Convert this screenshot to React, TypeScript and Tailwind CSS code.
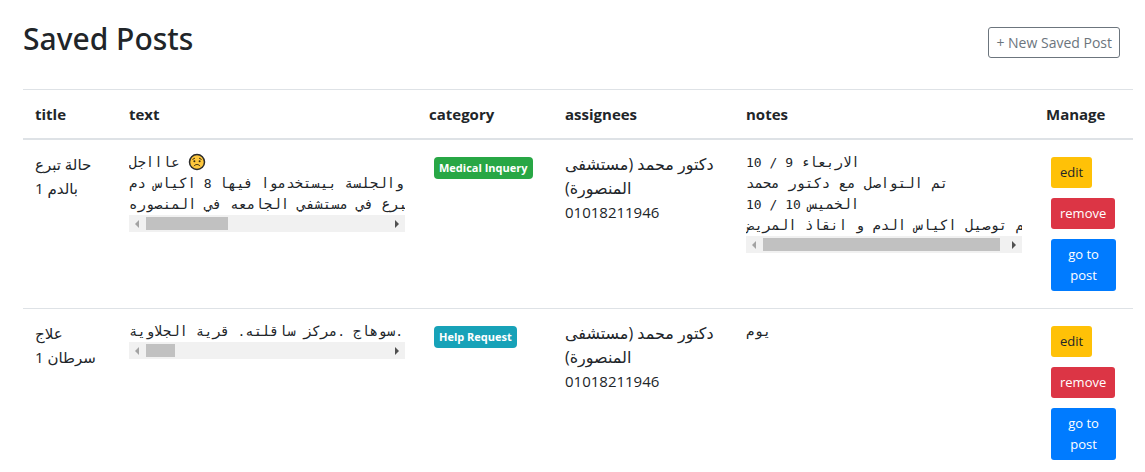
import type { ReactNode } from "react";

type Post = {
  title: string[];
  text: ReactNode[];
  textThumb: string;
  category: string;
  categoryColor: string;
  assignee: string[];
  phone: string;
  notes: ReactNode[];
  notesThumb?: string;
};

function WorriedFace() {
  return (
    <svg viewBox="0 0 18 18" className="inline-block size-[18px] align-[-4px]" role="img" aria-label="worried face">
      <circle cx="9" cy="9" r="7.5" fill="#ffc83d" stroke="#2b2b2b" strokeWidth="1.5" />
      <circle cx="6.4" cy="8.300" r="1" fill="#35290f" />
      <circle cx="11.6" cy="8.300" r="1" fill="#35290f" />
      <path d="M4.800 6.300 6.600 5.300M13.200 6.300 11.400 5.300M6.200 12.800c1.100-1.800 4.500-1.800 5.600 0" fill="none" stroke="#35290f" strokeWidth="1" strokeLinecap="round" />
    </svg>
  );
}

/* Digits, spaces and punctuation are set slightly smaller than the Arabic letters. */
function Mixed({ children }: { children: string }) {
  return (
    <span dir="rtl">
      {children.split(/([^\u0600-\u06FF]+)/).map((part, i) =>
        i % 2 ? <span key={i} className="text-[13px]">{part}</span> : part,
      )}
    </span>
  );
}

const assignee = ["دكتور محمد (مستشفى", "المنصورة)"];

const posts: Post[] = [
  {
    title: ["حالة تبرع", "بالدم 1"],
    text: [
      <>عاااجل <WorriedFace /></>,
      <Mixed>والجلسة بيستخدموا فيها 8 اكياس دم</Mixed>,
      <span dir="rtl">للتبرع في مستشفي الجامعه في المنصوره</span>,
    ],
    textThumb: "w-[34%]",
    category: "Medical Inquery",
    categoryColor: "bg-[#28a745]",
    assignee,
    phone: "01018211946",
    notes: [
      <Mixed>الاربعاء 9 / 10</Mixed>,
      <span dir="rtl">تم التواصل مع دكتور محمد</span>,
      <Mixed>الخميس 10 / 10</Mixed>,
      <span dir="rtl">تم توصيل اكياس الدم و انقاذ المريض</span>,
    ],
    notesThumb: "w-[98%]",
  },
  {
    title: ["علاج", "سرطان 1"],
    text: [<Mixed>.سوهاج .مركز ساقلته. قرية الجلاوية</Mixed>],
    textThumb: "w-[12%]",
    category: "Help Request",
    categoryColor: "bg-[#17a2b8]",
    assignee,
    phone: "01018211946",
    notes: [<Mixed>يوم</Mixed>],
  },
];

function ScrollTrack({ thumb }: { thumb: string }) {
  return (
    <div className="flex h-[17px] items-center bg-[#f1f1f1]">
      <svg viewBox="0 0 17 17" className="size-[17px] shrink-0" aria-hidden="true">
        <path d="M10 5v8L6 9z" fill="#a3a3a3" />
      </svg>
      <div className="flex-1">
        <div className={`h-[13px] bg-[#c1c1c1] ${thumb}`} />
      </div>
      <svg viewBox="0 0 17 17" className="size-[17px] shrink-0" aria-hidden="true">
        <path d="M7 5v8l4-4z" fill="#505050" />
      </svg>
    </div>
  );
}

function Lines({ lines, thumb }: { lines: ReactNode[]; thumb?: string }) {
  return (
    <div>
      <pre className="overflow-x-auto font-['DejaVu_Sans_Mono',monospace] text-sm leading-[21px] [scrollbar-width:none]">
        {lines.map((line, i) => (
          <div key={i} className="h-[21px]">{line}</div>
        ))}
      </pre>
      {thumb && <ScrollTrack thumb={thumb} />}
    </div>
  );
}

const cell = "p-3 text-left align-top";
const action = "rounded-[3px] px-[9px] py-[5px] text-[13px] leading-[21px]";

export default function App() {
  return (
    <main className="bg-white pt-5 pr-3 pl-[23px] font-['Open_Sans','DejaVu_Sans',sans-serif] text-[15px] leading-6 text-[#212529]">
      <header className="flex items-start justify-between pr-[13px] pb-[31px]">
        <h1 className="font-['Noto_Sans','Open_Sans',sans-serif] text-[30px] leading-[38px] font-medium">Saved Posts</h1>
        <button type="button" className="mt-[7px] rounded-[3px] border border-[#6c757d] px-[7px] py-1 text-sm leading-[21px] text-[#6c757d]">
          + New Saved Post
        </button>
      </header>
      <table className="w-full table-fixed border-separate border-spacing-0">
        <colgroup>
          <col className="w-[94px]" />
          <col className="w-[300px]" />
          <col className="w-[136px]" />
          <col className="w-[181px]" />
          <col className="w-[300px]" />
          <col className="w-[99px]" />
        </colgroup>
        <thead>
          <tr>
            {["title", "text", "category", "assignees", "notes", "Manage"].map((h) => (
              <th key={h} scope="col" className="border-t border-b-2 border-[#dee2e6] p-3 text-left font-bold">
                {h}
              </th>
            ))}
          </tr>
        </thead>
        <tbody className="[&>tr+tr>td]:border-t [&>tr+tr>td]:border-[#dee2e6]">
          {posts.map((post) => (
            <tr key={post.category}>
              <td className={cell}>
                {post.title.map((line) => (
                  <div key={line} className="whitespace-nowrap">{line}</div>
                ))}
              </td>
              <td className={cell}><Lines lines={post.text} thumb={post.textThumb} /></td>
              <td className={cell}>
                <span className={`m-[5px] block w-fit rounded px-[5px] text-[11px] leading-[22px] font-bold whitespace-nowrap text-white ${post.categoryColor}`}>
                  {post.category}
                </span>
              </td>
              <td className={cell}>
                {post.assignee.map((line) => (
                  <div key={line} className="text-base leading-6 whitespace-nowrap">
                    <span dir="rtl">{line}</span>
                  </div>
                ))}
                <div>{post.phone}</div>
              </td>
              <td className={cell}><Lines lines={post.notes} thumb={post.notesThumb} /></td>
              <td className={cell}>
                <div className="m-[5px] flex flex-col items-start gap-[10px]">
                  <button type="button" className={`${action} bg-[#ffc107]`}>edit</button>
                  <button type="button" className={`${action} bg-[#dc3545] text-white`}>remove</button>
                  <a href="#post" className={`${action} w-full bg-[#007bff] text-center text-white`}>go to post</a>
                </div>
              </td>
            </tr>
          ))}
        </tbody>
      </table>
    </main>
  );
}
